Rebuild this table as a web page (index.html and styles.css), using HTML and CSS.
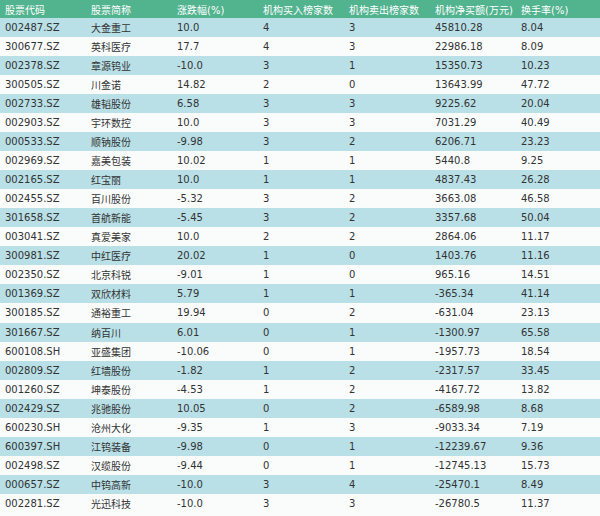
FILE: index.html
```html
<!DOCTYPE html>
<html lang="zh">
<head>
<meta charset="utf-8">
<link rel="stylesheet" href="styles.css">
</head>
<body>
<div class="table">
  <div class="row head"><span>股票代码</span><span>股票简称</span><span>涨跌幅(%)</span><span>机构买入榜家数</span><span>机构卖出榜家数</span><span>机构净买额(万元)</span><span>换手率(%)</span></div>
  <div class="row"><span>002487.SZ</span><span>大金重工</span><span>10.0</span><span>4</span><span>3</span><span>45810.28</span><span>8.04</span></div>
  <div class="row"><span>300677.SZ</span><span>英科医疗</span><span>17.7</span><span>4</span><span>3</span><span>22986.18</span><span>8.09</span></div>
  <div class="row"><span>002378.SZ</span><span>章源钨业</span><span>-10.0</span><span>3</span><span>1</span><span>15350.73</span><span>10.23</span></div>
  <div class="row"><span>300505.SZ</span><span>川金诺</span><span>14.82</span><span>2</span><span>0</span><span>13643.99</span><span>47.72</span></div>
  <div class="row"><span>002733.SZ</span><span>雄韬股份</span><span>6.58</span><span>3</span><span>3</span><span>9225.62</span><span>20.04</span></div>
  <div class="row"><span>002903.SZ</span><span>宇环数控</span><span>10.0</span><span>3</span><span>3</span><span>7031.29</span><span>40.49</span></div>
  <div class="row"><span>000533.SZ</span><span>顺钠股份</span><span>-9.98</span><span>3</span><span>2</span><span>6206.71</span><span>23.23</span></div>
  <div class="row"><span>002969.SZ</span><span>嘉美包装</span><span>10.02</span><span>1</span><span>1</span><span>5440.8</span><span>9.25</span></div>
  <div class="row"><span>002165.SZ</span><span>红宝丽</span><span>10.0</span><span>1</span><span>1</span><span>4837.43</span><span>26.28</span></div>
  <div class="row"><span>002455.SZ</span><span>百川股份</span><span>-5.32</span><span>3</span><span>2</span><span>3663.08</span><span>46.58</span></div>
  <div class="row"><span>301658.SZ</span><span>首航新能</span><span>-5.45</span><span>3</span><span>2</span><span>3357.68</span><span>50.04</span></div>
  <div class="row"><span>003041.SZ</span><span>真爱美家</span><span>10.0</span><span>2</span><span>2</span><span>2864.06</span><span>11.17</span></div>
  <div class="row"><span>300981.SZ</span><span>中红医疗</span><span>20.02</span><span>1</span><span>0</span><span>1403.76</span><span>11.16</span></div>
  <div class="row"><span>002350.SZ</span><span>北京科锐</span><span>-9.01</span><span>1</span><span>0</span><span>965.16</span><span>14.51</span></div>
  <div class="row"><span>001369.SZ</span><span>双欣材料</span><span>5.79</span><span>1</span><span>1</span><span>-365.34</span><span>41.14</span></div>
  <div class="row"><span>300185.SZ</span><span>通裕重工</span><span>19.94</span><span>0</span><span>2</span><span>-631.04</span><span>23.13</span></div>
  <div class="row"><span>301667.SZ</span><span>纳百川</span><span>6.01</span><span>0</span><span>1</span><span>-1300.97</span><span>65.58</span></div>
  <div class="row"><span>600108.SH</span><span>亚盛集团</span><span>-10.06</span><span>0</span><span>1</span><span>-1957.73</span><span>18.54</span></div>
  <div class="row"><span>002809.SZ</span><span>红墙股份</span><span>-1.82</span><span>1</span><span>2</span><span>-2317.57</span><span>33.45</span></div>
  <div class="row"><span>001260.SZ</span><span>坤泰股份</span><span>-4.53</span><span>1</span><span>2</span><span>-4167.72</span><span>13.82</span></div>
  <div class="row"><span>002429.SZ</span><span>兆驰股份</span><span>10.05</span><span>0</span><span>2</span><span>-6589.98</span><span>8.68</span></div>
  <div class="row"><span>600230.SH</span><span>沧州大化</span><span>-9.35</span><span>1</span><span>3</span><span>-9033.34</span><span>7.19</span></div>
  <div class="row"><span>600397.SH</span><span>江钨装备</span><span>-9.98</span><span>0</span><span>1</span><span>-12239.67</span><span>9.36</span></div>
  <div class="row"><span>002498.SZ</span><span>汉缆股份</span><span>-9.44</span><span>0</span><span>1</span><span>-12745.13</span><span>15.73</span></div>
  <div class="row"><span>000657.SZ</span><span>中钨高新</span><span>-10.0</span><span>3</span><span>4</span><span>-25470.1</span><span>8.49</span></div>
  <div class="row"><span>002281.SZ</span><span>光迅科技</span><span>-10.0</span><span>3</span><span>3</span><span>-26780.5</span><span>11.37</span></div>
</div>
</body>
</html>
```

FILE: styles.css
```css
html, body {
  margin: 0;
  padding: 0;
  background: #fafcfc;
}
.table {
  width: 600px;
  font-family: "DejaVu Sans", "Noto Sans CJK SC", sans-serif;
  font-size: 10px;
  color: #333;
}
.row {
  display: grid;
  grid-template-columns: 86px 86px 86px 86px 86px 86px 1fr;
  height: 19.04px;
  align-items: center;
  background: #fafcfc;
}
.row:nth-child(even) {
  background: #b9e0e7;
}
.row span {
  padding-left: 5px;
  white-space: nowrap;
}
.row.head {
  height: 18px;
  background: #52b38f;
  color: #fff;
}
```
